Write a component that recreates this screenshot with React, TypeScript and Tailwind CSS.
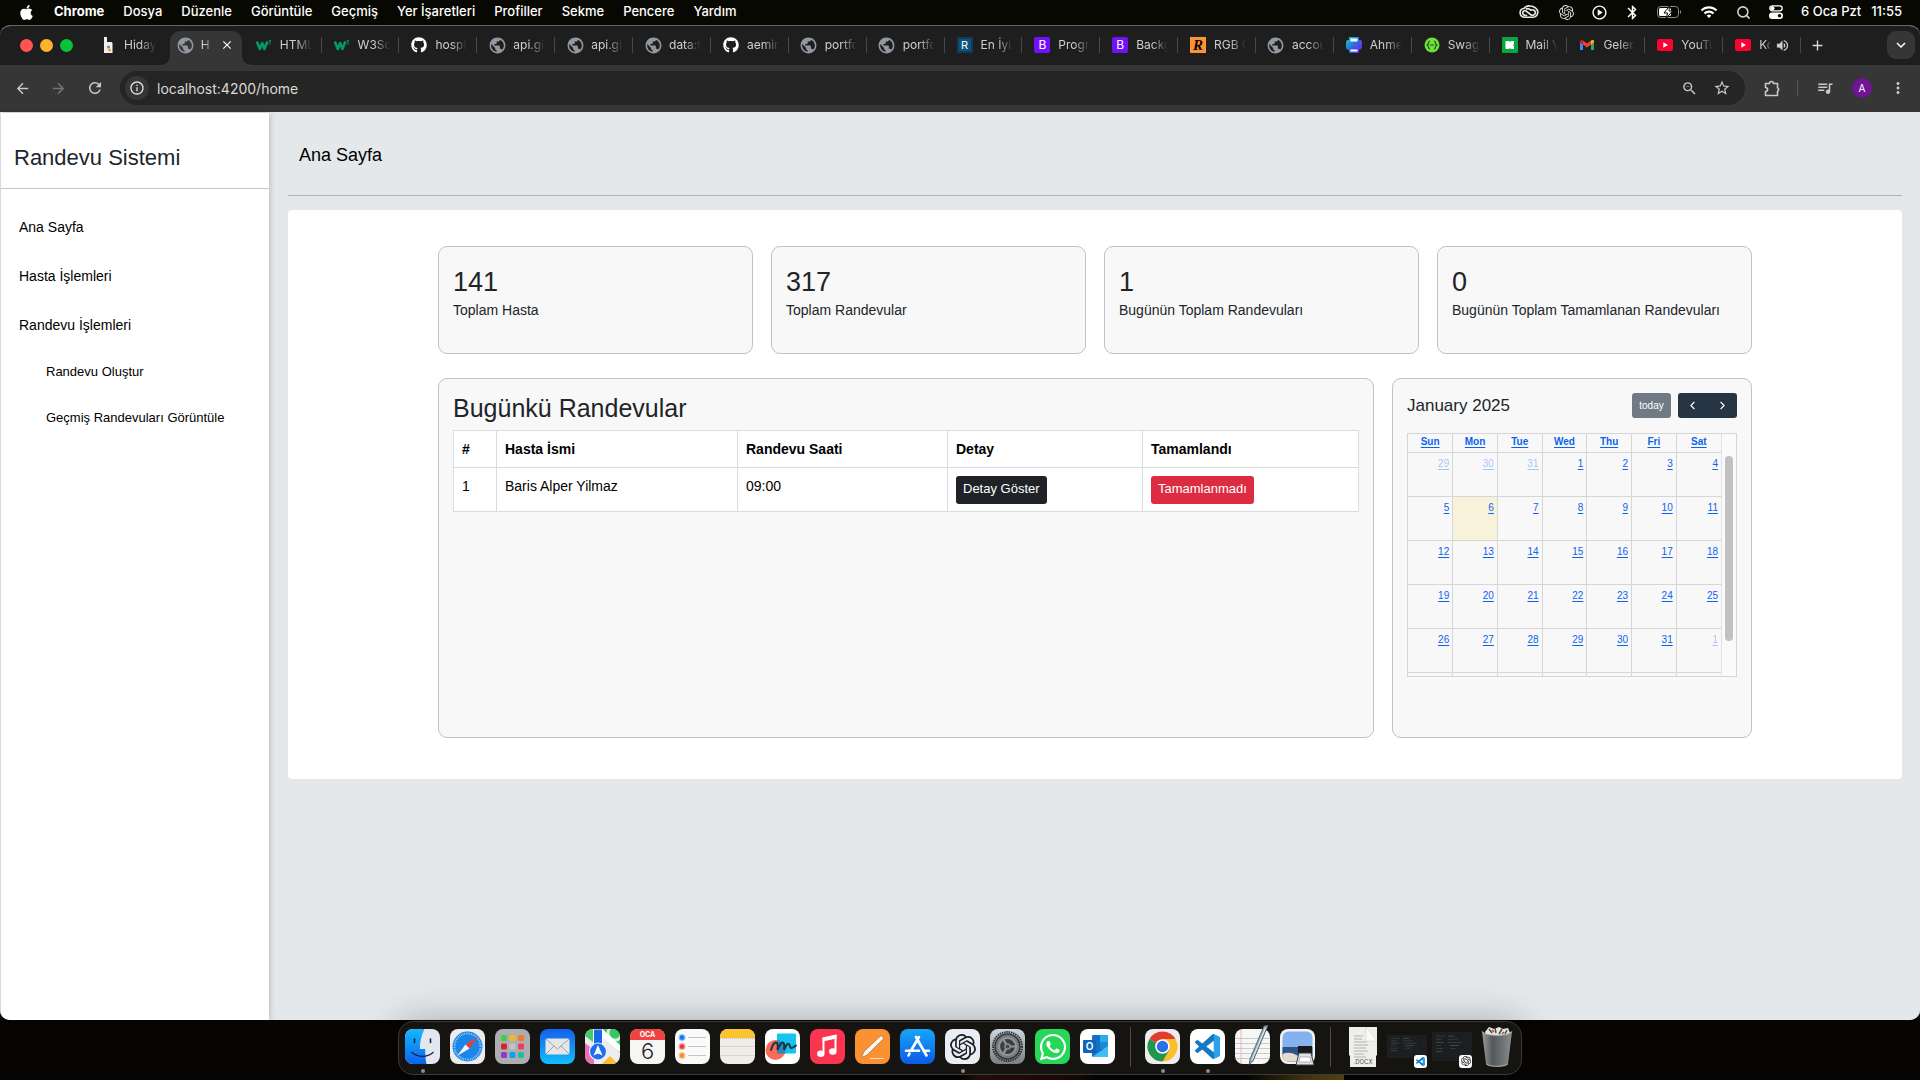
import React from "react";
import {
  MdArrowBack,
  MdArrowForward,
  MdRefresh,
  MdInfoOutline,
  MdZoomOut,
  MdStarOutline,
  MdQueueMusic,
  MdMoreVert,
  MdVolumeUp,
  MdPublic,
  MdAdd,
  MdClose,
  MdKeyboardArrowDown,
  MdOutlinePlayCircle,
  MdBluetooth,
  MdWifi,
} from "react-icons/md";
import { FaGithub, FaApple, FaWhatsapp } from "react-icons/fa";
import { SiOpenai } from "react-icons/si";
import { ChevronLeft, ChevronRight, Search } from "lucide-react";

/* ---------- Favicons ---------- */

const Globe = () => <MdPublic className="size-[19px] shrink-0 text-[#9198a0]" />;

const Github = () => <FaGithub className="size-4 text-white" />;

const W3 = () => (
  <svg viewBox="0 0 16 16" className="size-4" fill="none" stroke="#059862">
    <path d="M.8 4.5 3.8 12 6.2 6l2.2 6 3-7.5" strokeWidth="2.6" strokeLinejoin="round" />
    <path d="M12.6 3.6h2.2l-1.2 1.6c1.4 0 1.6 2-.9 1.9" strokeWidth="1" />
  </svg>
);

const Hiday = () => (
  <svg viewBox="0 0 16 16" className="size-4">
    <path d="M4 0h3v5h4.500l1 1V16H4z" fill="#f1f1ec" />
    <circle cx="8.500" cy="10" r="1.600" fill="#8b8b86" />
    <circle cx="9.500" cy="13" r="1.500" fill="#d9a441" />
  </svg>
);

const LetterIcon = ({ letter, className }: { letter: string; className: string }) => (
  <span className={"flex size-4 items-center justify-center text-[12px] leading-4 text-white " + className}>
    {letter}
  </span>
);

const Printer = () => (
  <svg viewBox="0 0 16 16" className="size-4">
    <defs>
      <linearGradient id="printer" x1="0" y1="0" x2="1" y2="1">
        <stop offset="0.1" stopColor="#12c2c2" />
        <stop offset="0.5" stopColor="#2f6be0" />
        <stop offset="1" stopColor="#7a12f0" />
      </linearGradient>
    </defs>
    <path d="M3 0h10v3h2l1 2v6l-2 2h-1v3H3v-3H2l-2-2V5l1-2h2z" fill="url(#printer)" />
    <rect x="4.500" y="1.500" width="7" height="3" fill="#fff" />
    <rect x="4.500" y="12.500" width="7" height="2" fill="#fff" />
  </svg>
);

const Swagger = () => (
  <svg viewBox="0 0 16 16" className="size-4">
    <circle cx="8" cy="8" r="7.500" fill="#6fe03c" />
    <path
      d="M6 4C4 4 5 7.300 3.200 8 5 8.700 4 12 6 12M10 4c2 0 1 3.300 2.800 4-1.800.7-.8 4-2.800 4M6 8h4"
      fill="none"
      stroke="#1c4a1c"
      strokeWidth="1.200"
    />
  </svg>
);

const MailTab = () => (
  <svg viewBox="0 0 16 16" className="size-4">
    <rect width="16" height="16" rx="1" fill="#0aa63f" />
    <path d="M3.500 4h3.500l1 1 1-1h3v3l-1 1 1 1v3H9l-1-1-1 1H3.500z" fill="#fff" />
  </svg>
);

const Gmail = () => (
  <svg viewBox="0 0 16 16" className="size-4">
    <path d="M1 4.500V13h3V7.300L1 5z" fill="#4285f4" />
    <path d="M15 4.500V13h-3V7.300L15 5z" fill="#34a853" />
    <path d="M4 3.500v4L8 10.400l4-2.900v-4L8 6.500z" fill="#ea4335" />
    <path d="M1 4.300C1 2.600 2.900 2.600 4 3.500v4L1 5.300z" fill="#c5221f" />
    <path d="M15 4.300c0-1.700-1.900-1.700-3-.8v4l3-2.200z" fill="#fbbc04" />
  </svg>
);

const Youtube = () => (
  <svg viewBox="0 0 16 16" className="size-4">
    <rect y="2" width="16" height="12" rx="2.500" fill="#ff0033" />
    <path d="M6.300 5.300v5.400L11 8z" fill="#fff" />
  </svg>
);

const tabs: { title: string; icon: React.ReactNode; active?: boolean; sound?: boolean; noSep?: boolean }[] = [
  { title: "Hidaya", icon: <Hiday />, noSep: true },
  { title: "H", icon: <Globe />, active: true, noSep: true },
  { title: "HTML", icon: <W3 /> },
  { title: "W3Sc", icon: <W3 /> },
  { title: "hospi", icon: <Github /> },
  { title: "api.gi", icon: <Globe /> },
  { title: "api.gi", icon: <Globe /> },
  { title: "data:t", icon: <Globe /> },
  { title: "aemir", icon: <Github /> },
  { title: "portfo", icon: <Globe /> },
  { title: "portfo", icon: <Globe /> },
  { title: "En İyi", icon: <LetterIcon letter="R" className="border-2 border-[#123a55] bg-[#0b5680] text-[11px]! leading-3!" /> },
  { title: "Progr", icon: <LetterIcon letter="B" className="rounded-xs bg-[#7210f8]" /> },
  { title: "Backg", icon: <LetterIcon letter="B" className="rounded-xs bg-[#7210f8]" /> },
  { title: "RGB C", icon: <LetterIcon letter="R" className="bg-[#ff9233] font-['Liberation_Serif',serif] text-[15px]! font-bold text-black! italic" /> },
  { title: "accou", icon: <Globe /> },
  { title: "Ahme", icon: <Printer /> },
  { title: "Swag", icon: <Swagger /> },
  { title: "Mail V", icon: <MailTab /> },
  { title: "Geler", icon: <Gmail /> },
  { title: "YouTu", icon: <Youtube /> },
  { title: "Ko", icon: <Youtube />, sound: true },
];

/* ---------- macOS menu bar ---------- */

const menus = ["Dosya", "Düzenle", "Görüntüle", "Geçmiş", "Yer İşaretleri", "Profiller", "Sekme", "Pencere", "Yardım"];

function MenuBar() {
  return (
    <header className="flex h-[25px] shrink-0 items-center justify-between bg-[#080802] pr-[18px] pb-px pl-[18px] text-[13px] font-medium text-white">
      <nav className="flex items-center gap-[19px]">
        <FaApple className="size-[17px]" />
        <span className="font-bold">Chrome</span>
        {menus.map((m) => (
          <span key={m}>{m}</span>
        ))}
      </nav>
      <div className="flex items-center">
        <svg viewBox="0 0 22 16" className="mr-[20px] h-4 w-[20px]" fill="none" stroke="#e8e8e8" strokeWidth="1.800">
          <path d="M7 13.800C3.500 14 1.200 11.800 1.200 8.800c0-2.600 2-4.400 4.200-4.600C7 1.900 9.500 1 12 1.300c4.600.4 8.700 3.200 8.700 7 0 3-2.200 5.500-5.200 5.500z" />
          <path d="M9 11.500c-3 1-5-.8-5-2.600C4 7 6 6 8 7l5 4c2 1.200 5 .3 5-2.400 0-2.200-2.600-3.800-5-2.600-1.800-1.800-4-2-5.500-1" />
        </svg>
        <SiOpenai className="mr-[17px] size-[15px] text-[#d9d9d9]" />
        <MdOutlinePlayCircle className="mr-[16px] size-[17px]" />
        <MdBluetooth className="mr-[16px] size-[17px]" />
        <svg viewBox="0 0 25 12" className="mr-[18px] h-3 w-[25px]">
          <rect x="0.500" y="0.500" width="21" height="11" rx="3" fill="none" stroke="#8a8a88" />
          <rect x="2" y="2" width="12" height="8" rx="1.500" fill="#fff" />
          <path d="M23 4v4c1.500-.6 1.500-3.400 0-4z" fill="#8a8a88" />
          <path d="M12.500 0 7 7h3.500L9.500 12l6-7H12z" fill="#fff" stroke="#080802" strokeWidth="1" />
        </svg>
        <MdWifi className="mr-[18px] size-[18px]" />
        <Search className="mr-[18px] size-[15px] text-[#d0d0d0]" strokeWidth={2.5} />
        <svg viewBox="0 0 14 14" className="mr-[18px] size-[14px]">
          <rect x="0.800" y="0.800" width="12.400" height="5" rx="2.500" fill="none" stroke="#fff" strokeWidth="1.300" />
          <circle cx="3.500" cy="3.300" r="2" fill="#fff" />
          <rect y="7.500" width="14" height="6.500" rx="3.200" fill="#fff" />
          <circle cx="10.500" cy="10.700" r="1.800" fill="#080802" />
        </svg>
        <span className="mr-[10px]">6 Oca Pzt</span>
        <span>11:55</span>
      </div>
    </header>
  );
}

/* ---------- Chrome window ---------- */

function TabStrip() {
  return (
    <div className="flex h-[39px] items-stretch bg-[#1e1e1e] pr-[5px] pl-[20px]">
      <div className="flex w-[68px] shrink-0 items-center gap-[7px] pb-px">
        <button aria-label="Kapat" className="size-[13px] rounded-full bg-[#ff5450]" />
        <button aria-label="Küçült" className="size-[13px] rounded-full bg-[#fdb32e]" />
        <button aria-label="Büyüt" className="size-[13px] rounded-full bg-[#08c239]" />
      </div>
      <div role="tablist" className="grid min-w-0 flex-1 grid-cols-[repeat(22,minmax(0,1fr))]">
        {tabs.map((t, i) => (
          <div
            key={i}
            role="tab"
            aria-selected={!!t.active}
            className={
              "relative flex min-w-0 items-center " +
              (t.active
                ? "mr-[2px] ml-[4px] mt-[5px] rounded-t-[10px] bg-[#363636] pr-[8px] pb-[6px] pl-[8px]"
                : "pb-px pl-[12px]")
            }
          >
            {t.active && (
              <>
                <span className="absolute bottom-0 -left-2 size-2 bg-[radial-gradient(circle_at_0_0,transparent_7px,#363636_8px)]" />
                <span className="absolute -right-2 bottom-0 size-2 bg-[radial-gradient(circle_at_100%_0,transparent_7px,#363636_8px)]" />
              </>
            )}
            <span className="flex size-4 shrink-0 items-center justify-center">{t.icon}</span>
            <span
              className={
                "overflow-hidden text-[12px] whitespace-nowrap text-[#cfcfcf] [mask-image:linear-gradient(to_right,black_50%,transparent)] " +
                (t.active ? "ml-[7px] w-[10px]" : t.sound ? "ml-2 w-[12px]" : "ml-2 w-8")
              }
            >
              {t.title}
            </span>
            {t.active && (
              <button aria-label="Sekmeyi kapat" className="ml-auto text-white">
                <MdClose className="size-[14px]" />
              </button>
            )}
            {t.sound && <MdVolumeUp className="ml-1 size-[15px] text-[#cfcfcf]" />}
            {!t.active && !t.noSep && <span className="absolute right-0 h-4 w-px bg-[#484848]" />}
          </div>
        ))}
      </div>
      <div className="flex w-[114px] shrink-0 items-center justify-between pb-px pl-[8px]">
        <button aria-label="Yeni sekme" className="text-[#dadada]">
          <MdAdd className="size-[17px]" />
        </button>
        <button
          aria-label="Sekmelerde ara"
          className="flex size-7 items-center justify-center rounded-[9px] bg-[#363636] text-white"
        >
          <MdKeyboardArrowDown className="size-[18px]" />
        </button>
      </div>
    </div>
  );
}

function Toolbar() {
  return (
    <div className="flex h-[47px] items-center bg-[#363636] pr-[13px] pb-px pl-[14px] text-[#c9c9c9]">
      <button aria-label="Geri" className="mr-[19px]">
        <MdArrowBack className="size-[17px]" />
      </button>
      <button aria-label="İleri" className="mr-[19px] text-[#757575]">
        <MdArrowForward className="size-[17px]" />
      </button>
      <button aria-label="Yenile" className="mr-[16px]">
        <MdRefresh className="size-[18px]" />
      </button>
      <div className="flex h-[34px] flex-1 items-center rounded-full bg-[#252525] pr-[14px] pl-[5px]">
        <span className="flex size-6 items-center justify-center rounded-full bg-[#363636] text-[#e0e0e0]">
          <MdInfoOutline className="size-4" />
        </span>
        <input
          aria-label="Adres"
          defaultValue="localhost:4200/home"
          className="ml-2 flex-1 bg-transparent text-[14px] text-[#dadada] outline-none"
        />
        <button aria-label="Uzaklaştır" className="mr-[15px]">
          <MdZoomOut className="size-[17px]" />
        </button>
        <button aria-label="Yer işareti ekle">
          <MdStarOutline className="size-[18px]" />
        </button>
      </div>
      <button aria-label="Uzantılar" className="mr-[16px] ml-[18px]">
        <svg viewBox="0 0 18 18" className="size-[18px]" fill="none" stroke="currentColor" strokeWidth="1.600" strokeLinejoin="round">
          <path d="M2.500 4.500h4a2 2 0 0 1 4 0h4v4.200a2 2 0 0 1 0 3.600v4.200h-12v-4c2.900-.4 2.900-3.600 0-4z" />
        </svg>
      </button>
      <span className="mr-[18px] h-4 w-px bg-[#555555]" />
      <button aria-label="Medya" className="mr-[18px]">
        <MdQueueMusic className="size-[18px]" />
      </button>
      <button aria-label="Profil" className="mr-[17px] size-5 rounded-full bg-[#701493] text-[10px] leading-5 text-white">
        A
      </button>
      <button aria-label="Menü">
        <MdMoreVert className="size-[18px]" />
      </button>
    </div>
  );
}

/* ---------- Application ---------- */

function Sidebar() {
  return (
    <aside className="z-10 ml-px w-[268px] shrink-0 bg-white shadow-[1px_0_6px_rgba(0,0,0,0.18)]">
      <h1 className="flex h-[76px] items-center border-b border-[#c3c4c5] pt-[15px] pl-[13px] text-[22px] leading-[26px] text-[#212529]">
        Randevu Sistemi
      </h1>
      <nav className="pt-[27px] text-[14px] text-black">
        <ul className="pl-[18px] leading-[22px]">
          <li className="mb-[27px]">
            <a href="#ana">Ana Sayfa</a>
          </li>
          <li className="mb-[27px]">
            <a href="#hasta">Hasta İşlemleri</a>
          </li>
          <li>
            <a href="#randevu">Randevu İşlemleri</a>
            <ul className="mt-[26px] pl-[27px] text-[13px] leading-5">
              <li className="mb-[26px]">
                <a href="#olustur">Randevu Oluştur</a>
              </li>
              <li>
                <a href="#gecmis">Geçmiş Randevuları Görüntüle</a>
              </li>
            </ul>
          </li>
        </ul>
      </nav>
    </aside>
  );
}

const stats = [
  { value: "141", label: "Toplam Hasta" },
  { value: "317", label: "Toplam Randevular" },
  { value: "1", label: "Bugünün Toplam Randevuları" },
  { value: "0", label: "Bugünün Toplam Tamamlanan Randevuları" },
];

function Appointments() {
  const cell = "border border-[#d9dde1] pr-[7px] pl-2 text-left align-top leading-[22px]";
  return (
    <section className="min-w-0 flex-1 rounded-[9px] border border-[#c1c2c2] bg-[#f8f8f8] p-[14px]">
      <h2 className="mb-[7px] text-[25px] leading-[30px] text-[#212529]">Bugünkü Randevular</h2>
      <table className="w-full table-fixed border-collapse bg-white text-[14px] text-black">
        <thead>
          <tr>
            <th className={cell + " w-[43px] py-[7px]"}>#</th>
            <th className={cell + " w-[241px] py-[7px]"}>Hasta İsmi</th>
            <th className={cell + " w-[210px] py-[7px]"}>Randevu Saati</th>
            <th className={cell + " w-[195px] py-[7px]"}>Detay</th>
            <th className={cell + " py-[7px]"}>Tamamlandı</th>
          </tr>
        </thead>
        <tbody>
          <tr>
            <td className={cell + " py-[7px]"}>1</td>
            <td className={cell + " py-[7px]"}>Baris Alper Yilmaz</td>
            <td className={cell + " py-[7px]"}>09:00</td>
            <td className={cell + " pt-[8px] pb-[7px]"}>
              <button className="block h-7 rounded-[3px] bg-[#1f2327] px-[7px] pb-[3px] text-[13px] text-white">
                Detay Göster
              </button>
            </td>
            <td className={cell + " pt-[8px] pb-[7px]"}>
              <button className="block h-7 rounded-[3px] bg-[#dd2c41] px-[7px] pb-[3px] text-[13px] text-white">
                Tamamlanmadı
              </button>
            </td>
          </tr>
        </tbody>
      </table>
    </section>
  );
}

const weekDays = ["Sun", "Mon", "Tue", "Wed", "Thu", "Fri", "Sat"];
const weeks = [
  [29, 30, 31, 1, 2, 3, 4],
  [5, 6, 7, 8, 9, 10, 11],
  [12, 13, 14, 15, 16, 17, 18],
  [19, 20, 21, 22, 23, 24, 25],
  [26, 27, 28, 29, 30, 31, 1],
];

function Calendar() {
  return (
    <section className="h-[360px] w-[360px] shrink-0 rounded-[9px] border border-[#c1c2c2] bg-[#f8f8f8] p-[14px]">
      <div className="mb-[15px] flex h-[25px] items-center">
        <h2 className="flex-1 text-[17px] leading-[22px] text-[#212529]">January 2025</h2>
        <button className="mr-[7px] h-full w-[39px] rounded-[3px] bg-[#6f7a84] text-[10px] text-white">today</button>
        <div className="flex h-full w-[59px] overflow-hidden rounded-[3px] bg-[#263443] text-white">
          <button aria-label="Önceki ay" className="flex flex-1 items-center justify-center">
            <ChevronLeft className="size-[13px]" />
          </button>
          <button aria-label="Sonraki ay" className="flex flex-1 items-center justify-center">
            <ChevronRight className="size-[13px]" />
          </button>
        </div>
      </div>
      <div className="flex h-[244px] overflow-hidden border border-[#d6d6d6] text-[10px] text-[#0d63f0]">
        <div className="min-w-0 flex-1">
          <table className="h-[270px] w-full table-fixed border-collapse">
            <thead>
              <tr className="h-[18px]">
                {weekDays.map((d) => (
                  <th key={d} className="border-r border-b border-[#d6d6d6] p-0 pb-px leading-4 font-bold last:border-r-0">
                    <a href={"#" + d} className="underline underline-offset-2">
                      {d}
                    </a>
                  </th>
                ))}
              </tr>
            </thead>
            <tbody>
              {weeks.map((w, r) => (
                <tr key={r} className="h-11">
                  {w.map((d, c) => (
                    <td
                      key={c}
                      className={
                        "border-r border-b border-[#d6d6d6] p-0 pt-[3px] pr-[3px] text-right align-top leading-[15px] last:border-r-0 " +
                        (r === 1 && c === 1 ? "bg-[#f9f2da]" : "")
                      }
                    >
                      <a
                        href={"#gun-" + r + "-" + c}
                        className={
                          "underline underline-offset-2 " +
                          ((r === 0 && c < 3) || (r === 4 && c === 6) ? "opacity-35" : "")
                        }
                      >
                        {d}
                      </a>
                    </td>
                  ))}
                </tr>
              ))}
              <tr>
                {weekDays.map((d) => (
                  <td key={d} className="border-r border-[#d6d6d6] last:border-r-0" />
                ))}
              </tr>
            </tbody>
          </table>
        </div>
        <div className="w-[15px] border-l border-[#e2e2e2] bg-[#fafafa] pt-[22px] pl-[3px]">
          <div className="h-[185px] w-2 rounded-full bg-[#c1c1c1]" />
        </div>
      </div>
    </section>
  );
}

function Page() {
  return (
    <div className="flex flex-1 bg-[#e4e8eb] pt-px font-['Liberation_Sans',Arial,sans-serif]">
      <Sidebar />
      <main className="min-w-0 flex-1 pr-[18px] pl-[19px]">
        <h1 className="h-[83px] border-b border-[#b0b4b7] pt-[31px] pl-[11px] text-[18px] leading-[22px] text-black">
          Ana Sayfa
        </h1>
        <div className="mt-[14px] rounded-[4px] bg-white px-6 pt-9 pb-[41px]">
          <div className="mx-auto max-w-[1314px]">
            <div className="grid grid-cols-4 gap-[18px]">
              {stats.map((s) => (
                <div key={s.label} className="h-[108px] rounded-[9px] border border-[#c1c2c2] bg-[#f8f8f8] px-[14px] pt-[18px] text-[#212529]">
                  <div className="text-[27px] leading-[34px]">{s.value}</div>
                  <div className="text-[14px] leading-[22px] whitespace-nowrap">{s.label}</div>
                </div>
              ))}
            </div>
            <div className="mt-6 flex gap-[18px]">
              <Appointments />
              <Calendar />
            </div>
          </div>
        </div>
      </main>
    </div>
  );
}

/* ---------- Dock ---------- */

const tile = "size-[35px] overflow-hidden rounded-[8px]";

const VsCodeMark = ({ className }: { className: string }) => (
  <svg viewBox="0 0 24 24" className={className}>
    <path
      fill="#1379c4"
      d="M23.150 2.587L18.210.21a1.494 1.494 0 0 0-1.705.29l-9.460 8.630-4.120-3.128a.999.999 0 0 0-1.276.057L.327 7.261A1 1 0 0 0 .326 8.740L3.899 12 .326 15.260a1 1 0 0 0 .001 1.479L1.650 17.940a.999.999 0 0 0 1.276.057l4.120-3.128 9.460 8.630a1.492 1.492 0 0 0 1.704.29l4.942-2.377A1.500 1.500 0 0 0 24 20.060V3.939a1.500 1.500 0 0 0-.85-1.352zm-5.146 14.861L10.826 12l7.178-5.448v10.896z"
    />
    <path fill="#2ba1ee" d="M18.210.21 23.150 2.587A1.500 1.500 0 0 1 24 3.939V20.060a1.500 1.500 0 0 1-.85 1.353L18.210 23.790z" />
  </svg>
);

const Finder = () => (
  <svg viewBox="0 0 35 35" className={tile}>
    <defs>
      <linearGradient id="finder" x1="0" y1="0" x2="0" y2="1">
        <stop offset="0" stopColor="#16b8fb" />
        <stop offset="1" stopColor="#0a63f0" />
      </linearGradient>
    </defs>
    <rect width="35" height="35" fill="#e3e8f0" />
    <path d="M0 0h19.500C16 7 15 13 14.800 20h5.400c0 5 .3 10 1.300 15H0z" fill="url(#finder)" />
    <path d="M9.500 10v3.500M25.500 10v3.500" stroke="#13283f" strokeWidth="1.600" strokeLinecap="round" />
    <path d="M7 23.500c6 5.200 15 5.200 21 0" fill="none" stroke="#13283f" strokeWidth="1.500" strokeLinecap="round" />
  </svg>
);

const Safari = () => (
  <svg viewBox="0 0 35 35" className={tile}>
    <rect width="35" height="35" fill="#ececec" />
    <circle cx="17.500" cy="17.500" r="15" fill="#1b86e8" />
    <circle cx="17.500" cy="17.500" r="13" fill="none" stroke="#cfe6fb" strokeWidth="2" strokeDasharray="0.600 1.100" />
    <path d="M28 8 19.500 19.500 15.500 15.500z" fill="#f03a36" />
    <path d="M7 27 15.500 15.500 19.500 19.500z" fill="#f4f4f4" />
  </svg>
);

const launchColors = ["#3fd14d", "#f7b52c", "#f27a23", "#d6242e", "#b9c3cc", "#f73b60", "#8e3cc4", "#159ff2", "#1fc096"];
const Launchpad = () => (
  <svg viewBox="0 0 35 35" className={tile}>
    <rect width="35" height="35" fill="#aeaeb0" />
    {launchColors.map((c, i) => (
      <rect key={c} x={6 + (i % 3) * 8.500} y={6 + Math.floor(i / 3) * 8.500} width="6" height="6" rx="1.500" fill={c} />
    ))}
  </svg>
);

const Mail = () => (
  <svg viewBox="0 0 35 35" className={tile}>
    <defs>
      <linearGradient id="mail" x1="0" y1="0" x2="0" y2="1">
        <stop offset="0" stopColor="#1560ee" />
        <stop offset="1" stopColor="#12bdfb" />
      </linearGradient>
    </defs>
    <rect width="35" height="35" fill="url(#mail)" />
    <rect x="5.500" y="9.500" width="24" height="16" rx="1.500" fill="#e6e6e6" />
    <path d="m6 10 11.500 10L29 10M6 25l8-8M29 25l-8-8" fill="none" stroke="#9a9a9a" strokeWidth="0.900" />
  </svg>
);

const Maps = () => (
  <svg viewBox="0 0 35 35" className={tile}>
    <rect width="35" height="35" fill="#ececec" />
    <path d="M18 0h17v24z" fill="#2fcb5c" />
    <path d="M0 0h8v13L0 7z" fill="#45c96b" />
    <path d="M0 14l9 7v14H0z" fill="#ee6fb4" />
    <path d="M17 35l8-8 8 8z" fill="#f8c12b" />
    <circle cx="30" cy="4" r="7" fill="#2fcb5c" stroke="#e2e2e2" strokeWidth="3" />
    <path d="M17 0 35 16v7L17 8z" fill="#fff" />
    <rect x="8.500" width="9" height="18" fill="#1769e8" stroke="#fff" strokeWidth="1" />
    <circle cx="13" cy="22.500" r="8.500" fill="#1c6fee" stroke="#e9f0fb" strokeWidth="1.200" />
    <path d="m13 16 4.500 10.500L13 24.500l-4.500 2z" fill="#fff" />
  </svg>
);

const CalendarTile = () => (
  <div className={tile + " bg-[#f6f6f4] text-center"}>
    <div className="h-[11px] bg-[#f0433f] text-[7px] leading-[12px] font-bold text-white">OCA</div>
    <div className="text-[22px] leading-[23px] font-light text-[#222]">6</div>
  </div>
);

const Reminders = () => (
  <svg viewBox="0 0 35 35" className={tile}>
    <rect width="35" height="35" fill="#fafafa" />
    {["#1a78f0", "#ee3a3a", "#f39327"].map((c, i) => (
      <g key={c}>
        <circle cx="7" cy={8.500 + i * 9} r="2.500" fill={c} />
        <circle cx="7" cy={8.500 + i * 9} r="3.300" fill="none" stroke={c} strokeWidth="0.400" />
        <path d={"M13 " + (8.500 + i * 9) + "h18"} stroke="#c4c4c4" strokeWidth="1" />
      </g>
    ))}
  </svg>
);

const Notes = () => (
  <svg viewBox="0 0 35 35" className={tile}>
    <rect width="35" height="35" fill="#efede6" />
    <rect width="35" height="9" fill="#fcc331" />
    <path d="M0 9.500h35" stroke="#b9b6ac" strokeWidth="0.800" strokeDasharray="1 1" />
    <path d="M0 17.500h35M0 26.500h35" stroke="#d2cfc7" strokeWidth="0.800" />
  </svg>
);

const Freeform = () => (
  <svg viewBox="0 0 35 35" className={tile}>
    <rect width="35" height="35" fill="#fff" />
    <circle cx="10.500" cy="21" r="10" fill="#ff6a57" />
    <rect x="12" y="4.500" width="19" height="20" rx="1" fill="#13c4ee" />
    <path d="M12 11a10 10 0 0 1 8.500 10 10 10 0 0 1-.6 3.500H12z" fill="#2f86b8" />
    <path d="M6 21c3-10 8-10 6.500 0 4-10 8-10 6.500 0 2-5 4-8 5.500-5s0 5 6.500.5" fill="none" stroke="#17344c" strokeWidth="2" strokeLinecap="round" />
  </svg>
);

const Music = () => (
  <svg viewBox="0 0 35 35" className={tile}>
    <rect width="35" height="35" fill="#fb3550" />
    <path d="M13.500 24V9.500L25.500 7v14.500" fill="none" stroke="#fff" strokeWidth="2" />
    <path d="M12.500 8.500 26.500 5.500v4L12.500 12.500z" fill="#fff" />
    <ellipse cx="10.800" cy="24.800" rx="3.700" ry="3.200" fill="#fff" />
    <ellipse cx="22.800" cy="22.500" rx="3.700" ry="3.200" fill="#fff" />
  </svg>
);

const Pages = () => (
  <svg viewBox="0 0 35 35" className={tile}>
    <rect width="35" height="35" fill="#fb9231" />
    <path d="M6.500 28.500 9 22.500 26 6.500l3 2.800L12 26z" fill="#f7f7f7" stroke="#a8703a" strokeWidth="0.700" />
    <path d="M15 29.500h14" stroke="#ffe4c8" strokeWidth="0.900" />
  </svg>
);

const AppStore = () => (
  <svg viewBox="0 0 35 35" className={tile}>
    <defs>
      <linearGradient id="store" x1="0" y1="0" x2="0" y2="1">
        <stop offset="0" stopColor="#16a6f8" />
        <stop offset="1" stopColor="#0b5be6" />
      </linearGradient>
    </defs>
    <rect width="35" height="35" fill="url(#store)" />
    <path d="M19 8 11 21.500M16 8l10.500 18.500M9.500 24.500 8.500 26.500M6 21.800h13M23.500 21.800H29" stroke="#fff" strokeWidth="2.600" strokeLinecap="round" />
  </svg>
);

const ChatGpt = () => (
  <div className={tile + " flex items-center justify-center bg-[#e9eef5]"}>
    <SiOpenai className="size-[26px] text-[#1d1f22]" />
  </div>
);

const Settings = () => (
  <svg viewBox="0 0 35 35" className={tile}>
    <defs>
      <linearGradient id="settings" x1="0" y1="0" x2="0" y2="1">
        <stop offset="0" stopColor="#c9d6dd" />
        <stop offset="1" stopColor="#7d7f81" />
      </linearGradient>
    </defs>
    <rect width="35" height="35" fill="url(#settings)" />
    <circle cx="17.500" cy="17.500" r="14.500" fill="none" stroke="#2f3235" strokeWidth="2" strokeDasharray="1.500 0.800" />
    <circle cx="17.500" cy="17.500" r="12.500" fill="#77797b" stroke="#303336" strokeWidth="1.500" />
    <circle cx="17.500" cy="17.500" r="8.500" fill="#3b3e41" stroke="#929496" strokeWidth="2.200" />
    <path d="M17.500 17.500 13 9.800M17.500 17.500h9M17.500 17.500 13 25.300" stroke="#929496" strokeWidth="2.200" />
    <circle cx="17.500" cy="17.500" r="2.600" fill="#46494b" stroke="#929496" strokeWidth="1.200" />
  </svg>
);

const WhatsApp = () => (
  <div className={tile + " flex items-center justify-center bg-[#27d757]"}>
    <FaWhatsapp className="size-[30px] text-white" />
  </div>
);

const Outlook = () => (
  <div className={tile + " relative bg-white"}>
    <svg viewBox="0 0 35 35" className="size-full">
      <rect x="12" y="6" width="16" height="22" rx="1" fill="#1272c8" />
      <path d="M20 6h8v7h-8z" fill="#31a9ee" />
      <path d="M20 13h8v7h-8z" fill="#1c86d8" />
      <path d="M12 28 28 17v10l-1 1z" fill="#43bdf5" />
      <rect x="3" y="11" width="13" height="13" rx="1" fill="#0f65b8" />
    </svg>
    <span className="absolute top-[11px] left-[3px] w-[13px] text-center text-[10px] leading-[13px] font-semibold text-white">O</span>
  </div>
);

const Chrome = () => (
  <svg viewBox="0 0 35 35" className={tile}>
    <rect width="35" height="35" fill="#ededed" />
    <path d="M17.500 17.500 4.500 10A15 15 0 0 1 30.500 10z" fill="#e33b2e" />
    <path d="M17.500 17.500V10h13a15 15 0 0 1-13 22.500z" fill="#fbbf2d" />
    <path d="M17.500 17.500 4.500 10a15 15 0 0 0 13 22.500L24 21.300z" fill="#22964c" />
    <circle cx="17.500" cy="17.500" r="7.300" fill="#fff" />
    <circle cx="17.500" cy="17.500" r="5.700" fill="#2a6fe6" />
  </svg>
);

const VsCode = () => (
  <div className={tile + " flex items-center justify-center bg-white"}>
    <VsCodeMark className="size-[25px]" />
  </div>
);

const TextEdit = () => (
  <svg viewBox="0 0 35 35" className="size-[35px] overflow-visible">
    <rect width="35" height="35" rx="8" fill="#f7f7f7" />
    <path d="M0 9.500h35M0 14.500h35M0 19.500h35M0 24.500h35M1 29.500h33" stroke="#c4c4c6" strokeWidth="0.900" />
    <path d="M6 1v33" stroke="#f0a6a4" strokeWidth="0.800" />
    <path d="M33-3.500 29-3 15 30l-.8 5.500L18 32z" fill="#9db2bf" stroke="#4b5a64" strokeWidth="0.900" />
    <path d="M30.500-1 17 31" stroke="#e3edf2" strokeWidth="1" />
  </svg>
);

const Preview = () => (
  <svg viewBox="0 0 35 35" className="size-[35px] overflow-visible">
    <rect width="35" height="35" rx="8" fill="#f3f3f3" />
    <rect x="2.500" y="2.500" width="30" height="30" rx="6" fill="#83b2ee" />
    <path d="M2.500 18h30v8.500a6 6 0 0 1-6 6h-18a6 6 0 0 1-6-6z" fill="#2c5487" />
    <path d="M2.500 25c6-3 12 0 16 2v5.500h-10a6 6 0 0 1-6-6z" fill="#e5dccd" />
    <path d="M18 17h14v7H18z" fill="#17181a" />
    <path d="M19 24h12l3 12H16z" fill="#dfe3e6" stroke="#3a3d40" strokeWidth="1" />
    <path d="M20 28h10l1 5H19z" fill="#fff" stroke="#777" strokeWidth="0.500" />
  </svg>
);

const Docx = () => (
  <div className="relative h-[42px] w-[30px]">
    <svg viewBox="0 0 30 42" className="size-full">
      <path d="M1 1h28v28l-1 1v11H2V30l-1-1z" fill="#eeeeec" />
      <path d="M18 1 29 15H18z" fill="#fbfbfb" stroke="#cacaca" strokeWidth="0.500" />
      <path d="M6 10h9M6 13h8M6 16h13M6 19h14M6 22h12M6 25h14M6 28h10M6 31h12" stroke="#a9a9a7" strokeWidth="0.900" />
    </svg>
    <span className="absolute bottom-[2px] left-0 w-full text-center text-[6px] leading-[8px] text-[#555]">.DOCX</span>
  </div>
);

const Trash = () => (
  <svg viewBox="0 0 32 42" className="h-[42px] w-[32px]">
    <defs>
      <linearGradient id="bin" x1="0" y1="0" x2="1" y2="0">
        <stop offset="0" stopColor="#9a9c9e" />
        <stop offset="0.350" stopColor="#55585a" />
        <stop offset="0.700" stopColor="#707375" />
        <stop offset="1" stopColor="#8d9092" />
      </linearGradient>
    </defs>
    <path d="M4 6 8 1l5 2 5-2 4 2 5-1 2 5-3 4H6z" fill="#e6e6e4" />
    <path d="m8 3 3 4M14 2l1 5M21 3l-3 5M26 4l-2 4" stroke="#4a4a48" strokeWidth="1.500" />
    <path d="m11 4 2 2M23 6l-2 2" stroke="#d1383a" strokeWidth="1.500" />
    <path d="M1 5.500c4 5 26 5 30 0L27 38c-1 4-21 4-22 0z" fill="url(#bin)" />
    <path d="M1 5.500c4 5 26 5 30 0" fill="none" stroke="#b5b7b9" strokeWidth="1.200" />
    <path d="M5.500 38c4 3 17 3 21 0" fill="none" stroke="#a7a9ab" strokeWidth="1" />
  </svg>
);

const codeLines = ["M4 4h9", "M16 4h6", "M4 7h6", "M16 7h10", "M4 10h8", "M16 10h14", "M4 13h5", "M18 13h9", "M4 16h7", "M18 16h6", "M4 19h6"];

function WindowThumb({ tall, children }: { tall?: boolean; children: React.ReactNode }) {
  return (
    <div className="relative flex h-[42px] w-[40px] items-center">
      <svg viewBox="0 0 40 28" preserveAspectRatio="none" className={tall ? "h-[29px] w-full" : "h-[23px] w-full"}>
        <rect width="40" height="28" fill="#1c1e20" />
        {codeLines.map((d, i) => (
          <path key={i} d={d} stroke={i % 3 === 1 ? "#34503b" : i % 3 === 2 ? "#3d3943" : "#303843"} strokeWidth="1" />
        ))}
      </svg>
      <span className="absolute right-0 bottom-0 flex size-[13px] items-center justify-center rounded-[3px] bg-white">{children}</span>
    </div>
  );
}

const apps: { name: string; icon: React.ReactNode; running?: boolean }[] = [
  { name: "Finder", icon: <Finder />, running: true },
  { name: "Safari", icon: <Safari /> },
  { name: "Launchpad", icon: <Launchpad /> },
  { name: "Mail", icon: <Mail /> },
  { name: "Haritalar", icon: <Maps /> },
  { name: "Takvim", icon: <CalendarTile /> },
  { name: "Anımsatıcılar", icon: <Reminders /> },
  { name: "Notlar", icon: <Notes /> },
  { name: "Freeform", icon: <Freeform /> },
  { name: "Müzik", icon: <Music /> },
  { name: "Pages", icon: <Pages /> },
  { name: "App Store", icon: <AppStore /> },
  { name: "ChatGPT", icon: <ChatGpt />, running: true },
  { name: "Ayarlar", icon: <Settings /> },
  { name: "WhatsApp", icon: <WhatsApp /> },
  { name: "Outlook", icon: <Outlook /> },
];

const openApps: typeof apps = [
  { name: "Chrome", icon: <Chrome />, running: true },
  { name: "VS Code", icon: <VsCode />, running: true },
  { name: "TextEdit", icon: <TextEdit /> },
  { name: "Önizleme", icon: <Preview /> },
];

const DockButton = ({ app }: { app: (typeof apps)[number] }) => (
  <button aria-label={app.name} className="relative size-[35px]">
    {app.icon}
    {app.running && <span className="absolute -bottom-[9px] left-1/2 size-1 -translate-x-1/2 rounded-full bg-[#8c8b88]" />}
  </button>
);

const Divider = () => <span className="mr-1 ml-[5px] h-10 w-px bg-[#4a4844]" />;

function Dock() {
  return (
    <footer className="relative z-20 flex h-[60px] shrink-0 justify-center bg-[linear-gradient(to_right,transparent_50%,#2a0d08_51%,#1a0a06_56%,transparent_57%,transparent_65%,#4a3a10_68%,#5c4915_70%,transparent_70%)] bg-[length:100%_5px] bg-bottom bg-no-repeat pt-px">
      <div className="flex h-[54px] items-center gap-[10px] rounded-[15px] border border-[#3b3a37] bg-[#161410] pr-2 pb-[3px] pl-[6px] shadow-[0_0_36px_rgba(0,0,0,0.28)]">
        {apps.map((a) => (
          <DockButton key={a.name} app={a} />
        ))}
        <Divider />
        {openApps.map((a) => (
          <DockButton key={a.name} app={a} />
        ))}
        <Divider />
        <div className="ml-[3px] flex items-center gap-[9px]">
          <Docx />
          <div className="flex gap-[5px]">
            <WindowThumb>
              <VsCodeMark className="size-[9px]" />
            </WindowThumb>
            <WindowThumb tall>
              <SiOpenai className="size-[10px] text-[#222]" />
            </WindowThumb>
          </div>
          <Trash />
        </div>
      </div>
    </footer>
  );
}

export default function App() {
  return (
    <div className="flex min-h-screen flex-col bg-[#060503] font-[Inter,'Noto_Sans',sans-serif]">
      <MenuBar />
      <div className="relative flex flex-1 flex-col overflow-hidden rounded-[10px] border-t border-[#666666] bg-[#e4e8eb]">
        <TabStrip />
        <Toolbar />
        <Page />
      </div>
      <Dock />
    </div>
  );
}
